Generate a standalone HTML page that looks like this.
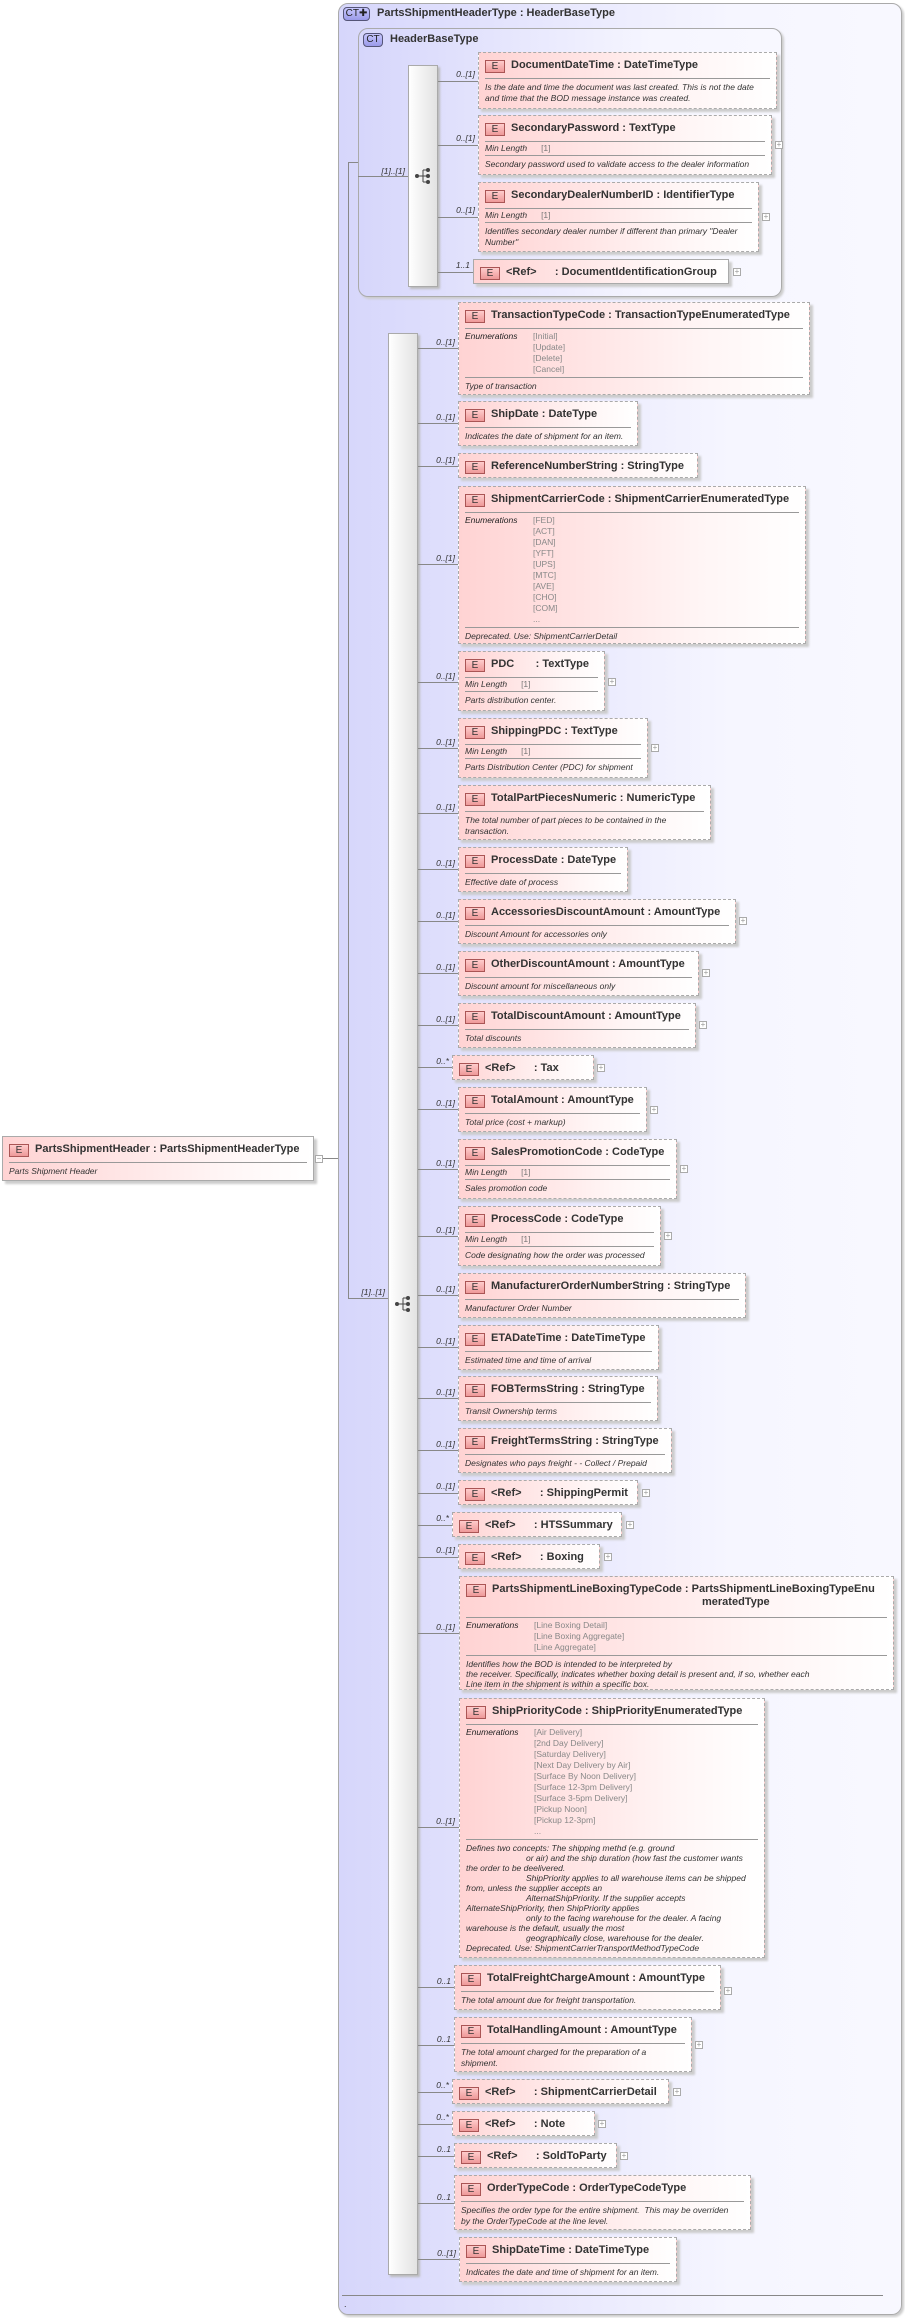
<!DOCTYPE html>
<html><head><meta charset="utf-8"><style>
*{margin:0;padding:0}
body{width:905px;height:2318px;position:relative;background:#fff;font-family:"Liberation Sans",sans-serif;color:#333;overflow:hidden}
.ab{position:absolute}
.ct{position:absolute;box-sizing:border-box;border:1px solid #aaa;border-radius:10px;background:linear-gradient(90deg,#d6d6fb,#f6f6ff 70%,#f8f8ff);box-shadow:2px 2px 2px #ccc}
.ctt{position:absolute;font:bold 11px "Liberation Sans",sans-serif;color:#333;white-space:nowrap}
.cti{position:absolute;box-sizing:border-box;height:14px;border:1px solid #557;border-radius:4px;background:linear-gradient(#c8c8ff,#9a9ae8);font:10px/12px "Liberation Sans",sans-serif;text-align:center;color:#222}
.b{position:absolute;box-sizing:border-box;border:1px dashed #aaa;background:linear-gradient(90deg,#ffd3d3,#fff5f5 70%,#fff);box-shadow:3px 3px 2px #ccc;overflow:hidden}
.s{border-style:solid}
.h{position:relative;height:25px;padding-left:32px;font:bold 11px/25px "Liberation Sans",sans-serif;white-space:nowrap;color:#333}
.e{position:absolute;left:6px;top:7px;width:20px;height:13px;box-sizing:border-box;border:1px solid #a55;background:linear-gradient(#fcc,#e99);font:normal 10px/11px "Liberation Sans",sans-serif;text-align:center;color:#333}
.sp{border-top:1px solid #999;margin:0 6px}
.d{font:italic 8.5px/11px "Liberation Sans",sans-serif;padding:3px 6px 2px;color:#333;white-space:nowrap}
.ml{font:italic 8.5px/13px "Liberation Sans",sans-serif;padding:0 6px;color:#333}
.ml span{font-style:normal;color:#777;margin-left:14px}
.en{display:flex;font:8.5px/11px "Liberation Sans",sans-serif;padding:2px 6px}
.en i{width:68px;color:#222}
.en div{color:#888}
.ln{position:absolute;height:1px;background:#888}
.vl{position:absolute;width:1px;background:#888}
.lb{position:absolute;width:40px;text-align:right;font:italic 8.5px "Liberation Sans",sans-serif;color:#333}
.pl{position:absolute;width:8px;height:8px;box-sizing:border-box;border:1px solid #aaa;background:#fff;font:8px/6px "Liberation Sans",sans-serif;text-align:center;color:#999}
.seq{position:absolute;box-sizing:border-box;border:1px solid #aaa;background:linear-gradient(90deg,#fff,#e2e2e2);box-shadow:2px 2px 2px #bbb}
.ind{padding-left:60px}
</style></head><body>

<div class="b s" style="left:2px;top:1136px;width:312px;height:45px">
<div class="h"><span class="e">E</span>PartsShipmentHeader : PartsShipmentHeaderType</div>
<div class="sp"></div>
<div class="d">Parts Shipment Header</div>
</div>
<div class="pl" style="left:315px;top:1155px;line-height:5px">−</div>
<div class="ln" style="left:323px;top:1158px;width:25px"></div>

<div class="ct" style="left:338px;top:3px;width:564px;height:2312px"></div>
<div class="cti" style="left:343px;top:7px;width:27px">CT✚</div>
<div class="ctt" style="left:377px;top:7px">PartsShipmentHeaderType : HeaderBaseType</div>

<div class="vl" style="left:348px;top:162px;height:1137px"></div>

<div class="ct" style="left:358px;top:28px;width:424px;height:269px"></div>
<div class="cti" style="left:363px;top:33px;width:20px">CT</div>
<div class="ctt" style="left:390px;top:33px">HeaderBaseType</div>
<div class="ln" style="left:348px;top:162px;width:10px"></div>
<div class="ln" style="left:358px;top:176px;width:50px"></div>
<div class="lb" style="left:365px;top:166px">[1]..[1]</div>
<div class="seq" style="left:408px;top:65px;width:30px;height:222px"></div>
<svg class="ab" style="left:414px;top:167px" width="18" height="18" viewBox="0 0 18 18"><circle cx="3" cy="9" r="2" fill="#444"/><path d="M3 9H9M9 3V15M9 3H13M9 9H13M9 15H13" stroke="#444" fill="none"/><circle cx="14" cy="3" r="2" fill="#444"/><circle cx="14" cy="9" r="2" fill="#444"/><circle cx="14" cy="15" r="2" fill="#444"/></svg>

<div class="ln" style="left:438px;top:81px;width:40px"></div><div class="lb" style="left:435px;top:69px">0..[1]</div>
<div class="b" style="left:478px;top:52px;width:299px;height:57px"><div class="h"><span class="e">E</span>DocumentDateTime : DateTimeType</div><div class="sp"></div><div class="d">Is the date and time the document was last created. This is not the date<br>and time that the BOD message instance was created.</div></div>

<div class="ln" style="left:438px;top:145px;width:40px"></div><div class="lb" style="left:435px;top:133px">0..[1]</div>
<div class="b" style="left:478px;top:115px;width:294px;height:60px"><div class="h"><span class="e">E</span>SecondaryPassword : TextType</div><div class="sp"></div><div class="ml">Min Length<span>[1]</span></div><div class="sp"></div><div class="d">Secondary password used to validate access to the dealer information</div></div>
<div class="pl" style="left:775px;top:141px">+</div>

<div class="ln" style="left:438px;top:217px;width:40px"></div><div class="lb" style="left:435px;top:205px">0..[1]</div>
<div class="b" style="left:478px;top:182px;width:281px;height:70px"><div class="h"><span class="e">E</span>SecondaryDealerNumberID : IdentifierType</div><div class="sp"></div><div class="ml">Min Length<span>[1]</span></div><div class="sp"></div><div class="d">Identifies secondary dealer number if different than primary "Dealer<br>Number"</div></div>
<div class="pl" style="left:762px;top:213px">+</div>

<div class="ln" style="left:438px;top:272px;width:35px"></div><div class="lb" style="left:430px;top:260px">1..1</div>
<div class="b s" style="left:473px;top:259px;width:256px;height:25px"><div class="h"><span class="e">E</span>&lt;Ref&gt;&nbsp;&nbsp;&nbsp;&nbsp;&nbsp; : DocumentIdentificationGroup</div></div>
<div class="pl" style="left:733px;top:268px">+</div>

<div class="ln" style="left:348px;top:1298px;width:40px"></div>
<div class="lb" style="left:345px;top:1287px">[1]..[1]</div>
<div class="seq" style="left:388px;top:333px;width:30px;height:1942px"></div>
<svg class="ab" style="left:394px;top:1295px" width="18" height="18" viewBox="0 0 18 18"><circle cx="3" cy="9" r="2" fill="#444"/><path d="M3 9H9M9 3V15M9 3H13M9 9H13M9 15H13" stroke="#444" fill="none"/><circle cx="14" cy="3" r="2" fill="#444"/><circle cx="14" cy="9" r="2" fill="#444"/><circle cx="14" cy="15" r="2" fill="#444"/></svg>

<div class="ln" style="left:418px;top:348px;width:40px"></div><div class="lb" style="left:415px;top:337px">0..[1]</div>
<div class="b" style="left:458px;top:302px;width:352px;height:93px"><div class="h"><span class="e">E</span>TransactionTypeCode : TransactionTypeEnumeratedType</div><div class="sp"></div><div class="en"><i>Enumerations</i><div>[Initial]<br>[Update]<br>[Delete]<br>[Cancel]</div></div><div class="sp"></div><div class="d">Type of transaction</div></div>

<div class="ln" style="left:418px;top:423px;width:40px"></div><div class="lb" style="left:415px;top:412px">0..[1]</div>
<div class="b" style="left:458px;top:401px;width:180px;height:45px"><div class="h"><span class="e">E</span>ShipDate : DateType</div><div class="sp"></div><div class="d">Indicates the date of shipment for an item.</div></div>

<div class="ln" style="left:418px;top:466px;width:40px"></div><div class="lb" style="left:415px;top:455px">0..[1]</div>
<div class="b" style="left:458px;top:453px;width:240px;height:25px"><div class="h"><span class="e">E</span>ReferenceNumberString : StringType</div></div>

<div class="ln" style="left:418px;top:564px;width:40px"></div><div class="lb" style="left:415px;top:553px">0..[1]</div>
<div class="b" style="left:458px;top:486px;width:348px;height:158px"><div class="h"><span class="e">E</span>ShipmentCarrierCode : ShipmentCarrierEnumeratedType</div><div class="sp"></div><div class="en"><i>Enumerations</i><div>[FED]<br>[ACT]<br>[DAN]<br>[YFT]<br>[UPS]<br>[MTC]<br>[AVE]<br>[CHO]<br>[COM]<br>...</div></div><div class="sp"></div><div class="d">Deprecated. Use: ShipmentCarrierDetail</div></div>

<div class="ln" style="left:418px;top:682px;width:40px"></div><div class="lb" style="left:415px;top:671px">0..[1]</div>
<div class="b" style="left:458px;top:651px;width:147px;height:60px"><div class="h"><span class="e">E</span>PDC&nbsp;&nbsp;&nbsp;&nbsp;&nbsp;&nbsp; : TextType</div><div class="sp"></div><div class="ml">Min Length<span>[1]</span></div><div class="sp"></div><div class="d">Parts distribution center.</div></div>
<div class="pl" style="left:608px;top:678px">+</div>

<div class="ln" style="left:418px;top:748px;width:40px"></div><div class="lb" style="left:415px;top:737px">0..[1]</div>
<div class="b" style="left:458px;top:718px;width:190px;height:60px"><div class="h"><span class="e">E</span>ShippingPDC : TextType</div><div class="sp"></div><div class="ml">Min Length<span>[1]</span></div><div class="sp"></div><div class="d">Parts Distribution Center (PDC) for shipment</div></div>
<div class="pl" style="left:651px;top:744px">+</div>

<div class="ln" style="left:418px;top:813px;width:40px"></div><div class="lb" style="left:415px;top:802px">0..[1]</div>
<div class="b" style="left:458px;top:785px;width:253px;height:55px"><div class="h"><span class="e">E</span>TotalPartPiecesNumeric : NumericType</div><div class="sp"></div><div class="d">The total number of part pieces to be contained in the<br>transaction.</div></div>

<div class="ln" style="left:418px;top:869px;width:40px"></div><div class="lb" style="left:415px;top:858px">0..[1]</div>
<div class="b" style="left:458px;top:847px;width:170px;height:45px"><div class="h"><span class="e">E</span>ProcessDate : DateType</div><div class="sp"></div><div class="d">Effective date of process</div></div>

<div class="ln" style="left:418px;top:921px;width:40px"></div><div class="lb" style="left:415px;top:910px">0..[1]</div>
<div class="b" style="left:458px;top:899px;width:278px;height:45px"><div class="h"><span class="e">E</span>AccessoriesDiscountAmount : AmountType</div><div class="sp"></div><div class="d">Discount Amount for accessories only</div></div>
<div class="pl" style="left:739px;top:917px">+</div>

<div class="ln" style="left:418px;top:973px;width:40px"></div><div class="lb" style="left:415px;top:962px">0..[1]</div>
<div class="b" style="left:458px;top:951px;width:241px;height:45px"><div class="h"><span class="e">E</span>OtherDiscountAmount : AmountType</div><div class="sp"></div><div class="d">Discount amount for miscellaneous only</div></div>
<div class="pl" style="left:702px;top:969px">+</div>

<div class="ln" style="left:418px;top:1025px;width:40px"></div><div class="lb" style="left:415px;top:1014px">0..[1]</div>
<div class="b" style="left:458px;top:1003px;width:238px;height:45px"><div class="h"><span class="e">E</span>TotalDiscountAmount : AmountType</div><div class="sp"></div><div class="d">Total discounts</div></div>
<div class="pl" style="left:699px;top:1021px">+</div>

<div class="ln" style="left:418px;top:1067px;width:34px"></div><div class="lb" style="left:409px;top:1056px">0..*</div>
<div class="b" style="left:452px;top:1055px;width:142px;height:25px"><div class="h"><span class="e">E</span>&lt;Ref&gt;&nbsp;&nbsp;&nbsp;&nbsp;&nbsp; : Tax</div></div>
<div class="pl" style="left:597px;top:1064px">+</div>

<div class="ln" style="left:418px;top:1109px;width:40px"></div><div class="lb" style="left:415px;top:1098px">0..[1]</div>
<div class="b" style="left:458px;top:1087px;width:189px;height:45px"><div class="h"><span class="e">E</span>TotalAmount : AmountType</div><div class="sp"></div><div class="d">Total price (cost + markup)</div></div>
<div class="pl" style="left:650px;top:1106px">+</div>

<div class="ln" style="left:418px;top:1169px;width:40px"></div><div class="lb" style="left:415px;top:1158px">0..[1]</div>
<div class="b" style="left:458px;top:1139px;width:219px;height:60px"><div class="h"><span class="e">E</span>SalesPromotionCode : CodeType</div><div class="sp"></div><div class="ml">Min Length<span>[1]</span></div><div class="sp"></div><div class="d">Sales promotion code</div></div>
<div class="pl" style="left:680px;top:1165px">+</div>

<div class="ln" style="left:418px;top:1236px;width:40px"></div><div class="lb" style="left:415px;top:1225px">0..[1]</div>
<div class="b" style="left:458px;top:1206px;width:203px;height:60px"><div class="h"><span class="e">E</span>ProcessCode : CodeType</div><div class="sp"></div><div class="ml">Min Length<span>[1]</span></div><div class="sp"></div><div class="d">Code designating how the order was processed</div></div>
<div class="pl" style="left:664px;top:1232px">+</div>

<div class="ln" style="left:418px;top:1295px;width:40px"></div><div class="lb" style="left:415px;top:1284px">0..[1]</div>
<div class="b" style="left:458px;top:1273px;width:288px;height:45px"><div class="h"><span class="e">E</span>ManufacturerOrderNumberString : StringType</div><div class="sp"></div><div class="d">Manufacturer Order Number</div></div>

<div class="ln" style="left:418px;top:1347px;width:40px"></div><div class="lb" style="left:415px;top:1336px">0..[1]</div>
<div class="b" style="left:458px;top:1325px;width:201px;height:45px"><div class="h"><span class="e">E</span>ETADateTime : DateTimeType</div><div class="sp"></div><div class="d">Estimated time and time of arrival</div></div>

<div class="ln" style="left:418px;top:1398px;width:40px"></div><div class="lb" style="left:415px;top:1387px">0..[1]</div>
<div class="b" style="left:458px;top:1376px;width:200px;height:45px"><div class="h"><span class="e">E</span>FOBTermsString : StringType</div><div class="sp"></div><div class="d">Transit Ownership terms</div></div>

<div class="ln" style="left:418px;top:1450px;width:40px"></div><div class="lb" style="left:415px;top:1439px">0..[1]</div>
<div class="b" style="left:458px;top:1428px;width:214px;height:45px"><div class="h"><span class="e">E</span>FreightTermsString : StringType</div><div class="sp"></div><div class="d">Designates who pays freight - - Collect / Prepaid</div></div>

<div class="ln" style="left:418px;top:1493px;width:40px"></div><div class="lb" style="left:415px;top:1481px">0..[1]</div>
<div class="b" style="left:458px;top:1480px;width:180px;height:25px"><div class="h"><span class="e">E</span>&lt;Ref&gt;&nbsp;&nbsp;&nbsp;&nbsp;&nbsp; : ShippingPermit</div></div>
<div class="pl" style="left:642px;top:1489px">+</div>

<div class="ln" style="left:418px;top:1525px;width:34px"></div><div class="lb" style="left:409px;top:1513px">0..*</div>
<div class="b" style="left:452px;top:1512px;width:170px;height:25px"><div class="h"><span class="e">E</span>&lt;Ref&gt;&nbsp;&nbsp;&nbsp;&nbsp;&nbsp; : HTSSummary</div></div>
<div class="pl" style="left:626px;top:1521px">+</div>

<div class="ln" style="left:418px;top:1557px;width:40px"></div><div class="lb" style="left:415px;top:1545px">0..[1]</div>
<div class="b" style="left:458px;top:1544px;width:142px;height:25px"><div class="h"><span class="e">E</span>&lt;Ref&gt;&nbsp;&nbsp;&nbsp;&nbsp;&nbsp; : Boxing</div></div>
<div class="pl" style="left:604px;top:1553px">+</div>

<div class="ln" style="left:418px;top:1633px;width:41px"></div><div class="lb" style="left:415px;top:1622px">0..[1]</div>
<div class="b" style="left:459px;top:1576px;width:435px;height:114px"><div class="h" style="height:36px;line-height:13px;padding-top:6px;box-sizing:border-box"><span class="e">E</span>PartsShipmentLineBoxingTypeCode : PartsShipmentLineBoxingTypeEnu<br><span style="padding-left:210px">meratedType</span></div><div class="sp" style="margin-top:4px"></div><div class="en"><i>Enumerations</i><div>[Line Boxing Detail]<br>[Line Boxing Aggregate]<br>[Line Aggregate]</div></div><div class="sp"></div><div class="d" style="line-height:10px">Identifies how the BOD is intended to be interpreted by<br>the receiver. Specifically, indicates whether boxing detail is present and, if so, whether each<br>Line item in the shipment is within a specific box.</div></div>

<div class="ln" style="left:418px;top:1827px;width:41px"></div><div class="lb" style="left:415px;top:1816px">0..[1]</div>
<div class="b" style="left:459px;top:1698px;width:306px;height:260px"><div class="h"><span class="e">E</span>ShipPriorityCode : ShipPriorityEnumeratedType</div><div class="sp"></div><div class="en"><i>Enumerations</i><div>[Air Delivery]<br>[2nd Day Delivery]<br>[Saturday Delivery]<br>[Next Day Delivery by Air]<br>[Surface By Noon Delivery]<br>[Surface 12-3pm Delivery]<br>[Surface 3-5pm Delivery]<br>[Pickup Noon]<br>[Pickup 12-3pm]<br>...</div></div><div class="sp"></div><div class="d" style="line-height:10px">Defines two concepts: The shipping methd (e.g. ground<br><span class="ind">or air) and the ship duration (how fast the customer wants</span><br>the order to be deelivered.<br><span class="ind">ShipPriority applies to all warehouse items can be shipped</span><br>from, unless the supplier accepts an<br><span class="ind">AlternatShipPriority. If the supplier accepts</span><br>AlternateShipPriority, then ShipPriority applies<br><span class="ind">only to the facing warehouse for the dealer. A facing</span><br>warehouse is the default, usually the most<br><span class="ind">geographically close, warehouse for the dealer.</span><br>Deprecated. Use: ShipmentCarrierTransportMethodTypeCode</div></div>

<div class="ln" style="left:418px;top:1987px;width:36px"></div><div class="lb" style="left:411px;top:1976px">0..1</div>
<div class="b" style="left:454px;top:1965px;width:267px;height:45px"><div class="h"><span class="e">E</span>TotalFreightChargeAmount : AmountType</div><div class="sp"></div><div class="d">The total amount due for freight transportation.</div></div>
<div class="pl" style="left:724px;top:1987px">+</div>

<div class="ln" style="left:418px;top:2045px;width:36px"></div><div class="lb" style="left:411px;top:2034px">0..1</div>
<div class="b" style="left:454px;top:2017px;width:238px;height:55px"><div class="h"><span class="e">E</span>TotalHandlingAmount : AmountType</div><div class="sp"></div><div class="d">The total amount charged for the preparation of a<br>shipment.</div></div>
<div class="pl" style="left:695px;top:2041px">+</div>

<div class="ln" style="left:418px;top:2092px;width:34px"></div><div class="lb" style="left:409px;top:2080px">0..*</div>
<div class="b" style="left:452px;top:2079px;width:217px;height:25px"><div class="h"><span class="e">E</span>&lt;Ref&gt;&nbsp;&nbsp;&nbsp;&nbsp;&nbsp; : ShipmentCarrierDetail</div></div>
<div class="pl" style="left:673px;top:2088px">+</div>

<div class="ln" style="left:418px;top:2124px;width:34px"></div><div class="lb" style="left:409px;top:2112px">0..*</div>
<div class="b" style="left:452px;top:2111px;width:143px;height:25px"><div class="h"><span class="e">E</span>&lt;Ref&gt;&nbsp;&nbsp;&nbsp;&nbsp;&nbsp; : Note</div></div>
<div class="pl" style="left:598px;top:2120px">+</div>

<div class="ln" style="left:418px;top:2156px;width:36px"></div><div class="lb" style="left:411px;top:2144px">0..1</div>
<div class="b" style="left:454px;top:2143px;width:163px;height:25px"><div class="h"><span class="e">E</span>&lt;Ref&gt;&nbsp;&nbsp;&nbsp;&nbsp;&nbsp; : SoldToParty</div></div>
<div class="pl" style="left:620px;top:2152px">+</div>

<div class="ln" style="left:418px;top:2203px;width:36px"></div><div class="lb" style="left:411px;top:2192px">0..1</div>
<div class="b" style="left:454px;top:2175px;width:297px;height:55px"><div class="h"><span class="e">E</span>OrderTypeCode : OrderTypeCodeType</div><div class="sp"></div><div class="d">Specifies the order type for the entire shipment.&nbsp; This may be overriden<br>by the OrderTypeCode at the line level.</div></div>

<div class="ln" style="left:418px;top:2259px;width:41px"></div><div class="lb" style="left:416px;top:2248px">0..[1]</div>
<div class="b" style="left:459px;top:2237px;width:218px;height:45px"><div class="h"><span class="e">E</span>ShipDateTime : DateTimeType</div><div class="sp"></div><div class="d">Indicates the date and time of shipment for an item.</div></div>

<div class="ln" style="left:342px;top:2295px;width:541px"></div>
<div class="ab" style="left:344px;top:2299px;font:9px 'Liberation Sans',sans-serif">.</div>
</body></html>
